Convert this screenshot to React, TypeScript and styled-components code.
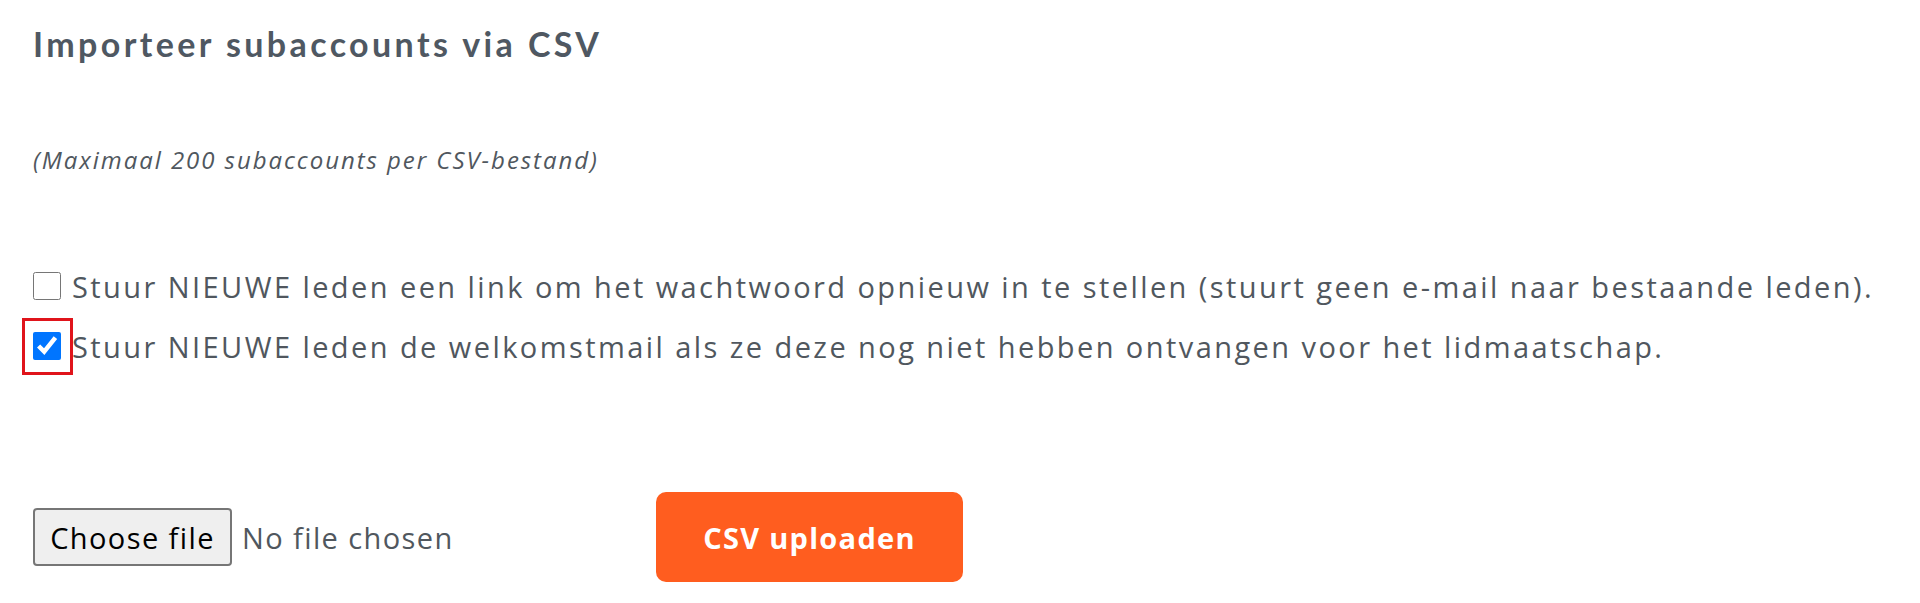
import React from "react";
import styled, { createGlobalStyle } from "styled-components";

const Global = createGlobalStyle`
  html, body { margin: 0; padding: 0; background: #ffffff; }
  body { font-family: "Open Sans", "Noto Sans", sans-serif; }
`;

const Page = styled.div`
  padding: 24px 0 0 33px;
  color: #50575e;
`;

const Title = styled.h2`
  margin: 0;
  font-family: "Lato", "Open Sans", sans-serif;
  font-weight: 700;
  font-size: 34px;
  letter-spacing: 3.4px;
  line-height: 40px;
  color: #4f5862;
`;

const Note = styled.p`
  margin: 80px 0 0 0;
  font-family: "Open Sans", sans-serif;
  font-style: italic;
  font-size: 24px;
  letter-spacing: 1.95px;
  line-height: 32px;
  color: #50575e;
`;

const Options = styled.div`
  margin-top: 90px;
  display: flex;
  flex-direction: column;
  gap: 20px;
`;

const OptionRow = styled.label`
  display: flex;
  align-items: center;
  gap: 11px;
  height: 40px;
  font-family: "Open Sans", sans-serif;
  font-size: 29px;
  letter-spacing: 2.43px;
  color: #50575e;
  white-space: nowrap;
`;

const BoxWrap = styled.span<{ $highlight?: boolean }>`
  position: relative;
  display: inline-flex;
  width: 28px;
  height: 28px;
  &::after {
    content: "";
    display: ${(p) => (p.$highlight ? "block" : "none")};
    position: absolute;
    left: -11px;
    top: -14px;
    width: 51px;
    height: 57px;
    box-sizing: border-box;
    border: 3px solid #e0141b;
    pointer-events: none;
  }
`;

const Check = styled.input`
  width: 28px;
  height: 28px;
  margin: 0;
`;

const FileRow = styled.div`
  margin-top: 126px;
  display: flex;
  align-items: center;
`;

const FilePicker = styled.label`
  width: 623px;
  display: flex;
  align-items: center;
  gap: 10px;
  font-family: "Open Sans", sans-serif;
  font-size: 29px;
  letter-spacing: 1.4px;
`;

const PickButton = styled.span`
  box-sizing: border-box;
  width: 199px;
  height: 58px;
  display: inline-flex;
  align-items: center;
  justify-content: center;
  background: #efefef;
  border: 2px solid #767676;
  border-radius: 4px;
  color: #000000;
`;

const PickStatus = styled.span`
  color: #50575e;
`;

const HiddenInput = styled.input`
  display: none;
`;

const Upload = styled.button`
  box-sizing: border-box;
  width: 307px;
  height: 90px;
  border: none;
  border-radius: 10px;
  background: #ff5d1f;
  color: #ffffff;
  font-family: "Open Sans", sans-serif;
  font-weight: 700;
  font-size: 29px;
  letter-spacing: 1.3px;
  cursor: pointer;
`;

export default function App() {
  return (
    <>
      <Global />
      <Page>
        <Title>Importeer subaccounts via CSV</Title>
        <Note>(Maximaal 200 subaccounts per CSV-bestand)</Note>
        <Options>
          <OptionRow>
            <BoxWrap>
              <Check type="checkbox" />
            </BoxWrap>
            Stuur NIEUWE leden een link om het wachtwoord opnieuw in te stellen (stuurt geen e-mail naar bestaande leden).
          </OptionRow>
          <OptionRow>
            <BoxWrap $highlight>
              <Check type="checkbox" defaultChecked />
            </BoxWrap>
            Stuur NIEUWE leden de welkomstmail als ze deze nog niet hebben ontvangen voor het lidmaatschap.
          </OptionRow>
        </Options>
        <FileRow>
          <FilePicker>
            <PickButton>Choose file</PickButton>
            <PickStatus>No file chosen</PickStatus>
            <HiddenInput type="file" accept=".csv" />
          </FilePicker>
          <Upload type="button">CSV uploaden</Upload>
        </FileRow>
      </Page>
    </>
  );
}
